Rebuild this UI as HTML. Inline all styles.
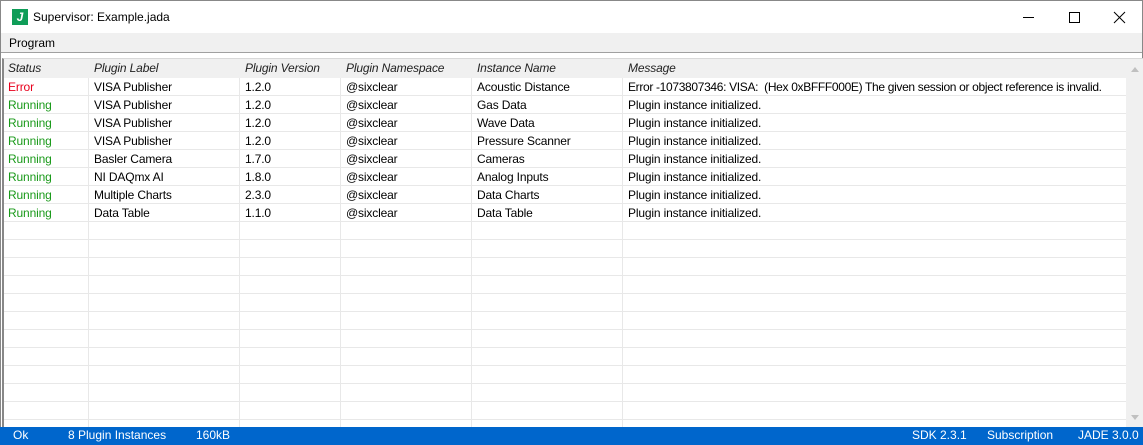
<!DOCTYPE html>
<html><head><style>
*{margin:0;padding:0;box-sizing:border-box}
body{width:1143px;height:445px;overflow:hidden;font-family:"Liberation Sans",sans-serif;font-size:12px;color:#000;background:#fff;position:relative}
.win{position:absolute;left:0;top:0;width:1143px;height:445px;border:1px solid #888}
.title{position:absolute;left:0;top:0;width:1141px;height:32px;background:#fff}
.logo{position:absolute;left:11px;top:8px;width:16px;height:16px;background:#0f9d58;color:#fff;font-weight:bold;font-size:12px;line-height:16px;text-align:center;font-style:italic}
.ttext{position:absolute;left:32px;top:9px;font-size:12px}
.menu{position:absolute;left:0;top:32px;width:1141px;height:20px;background:#f0f0f0;border-bottom:1px solid #a0a0a0}
.menu span{position:absolute;left:8px;top:3px}
.tbl{position:absolute;left:1px;top:57px;width:1141px;height:369px;border-top:1px solid #d8d8d8;border-left:2px solid #888;overflow:hidden}
.row{position:absolute;left:0;height:18px;width:1122px;border-bottom:1px solid #e8e8e8}
.hdr{background:#f0f0f0;font-style:italic;color:#222;border-bottom:none}
.c{position:absolute;top:2px;white-space:nowrap;letter-spacing:-0.15px}
.vl{position:absolute;top:19px;width:1px;height:360px;background:#e8e8e8}
.sb{position:absolute;left:1122px;top:0;width:18px;height:369px;background:#f0f0f0}
.status{position:absolute;left:0;top:427px;width:1143px;height:18px;background:#0066cc;color:#fff}
.status span{position:absolute;top:1px}
.r{color:#e8001c}.g{color:#1a9a1a}
</style></head><body>
<div class="win">
<div class="title"><div class="logo">J</div><div class="ttext">Supervisor: Example.jada</div>
<svg style="position:absolute;left:1022px;top:10px" width="110" height="14"><line x1="0" y1="6.5" x2="11" y2="6.5" stroke="#000"/><rect x="46.5" y="1.5" width="10" height="10" fill="none" stroke="#000"/><path d="M91 1L102 12M102 1L91 12" stroke="#000"/></svg></div>
<div class="menu"><span>Program</span></div>
<div class="tbl">
<div class="row hdr" style="top:0;height:19px"><span class="c" style="left:4px">Status</span><span class="c" style="left:90px">Plugin Label</span><span class="c" style="left:241px">Plugin Version</span><span class="c" style="left:342px">Plugin Namespace</span><span class="c" style="left:473px">Instance Name</span><span class="c" style="left:624px">Message</span></div>
<div id="rows"></div>
<div class="vl" style="left:84px"></div><div class="vl" style="left:235px"></div><div class="vl" style="left:336px"></div><div class="vl" style="left:467px"></div><div class="vl" style="left:618px"></div>
<div class="sb"><svg width="18" height="369"><path d="M5 13L9 8L13 13Z" fill="#c0c0c0"/><path d="M5 356L9 361L13 356Z" fill="#c0c0c0"/></svg></div>
</div>
<script>
var d=[["Error","r","VISA Publisher","1.2.0","Acoustic Distance","<span style='letter-spacing:-0.33px'>Error -1073807346: VISA:&nbsp; (Hex 0xBFFF000E) The given session or object reference is invalid.</span>"],
["Running","g","VISA Publisher","1.2.0","Gas Data","Plugin instance initialized."],
["Running","g","VISA Publisher","1.2.0","Wave Data","Plugin instance initialized."],
["Running","g","VISA Publisher","1.2.0","Pressure Scanner","Plugin instance initialized."],
["Running","g","Basler Camera","1.7.0","Cameras","Plugin instance initialized."],
["Running","g","NI DAQmx AI","1.8.0","Analog Inputs","Plugin instance initialized."],
["Running","g","Multiple Charts","2.3.0","Data Charts","Plugin instance initialized."],
["Running","g","Data Table","1.1.0","Data Table","Plugin instance initialized."]];
var h="";for(var i=0;i<20;i++){var t=19+i*18;h+='<div class="row" style="top:'+t+'px">';if(d[i]){var r=d[i];h+='<span class="c '+r[1]+'" style="left:4px">'+r[0]+'</span><span class="c" style="left:90px">'+r[2]+'</span><span class="c" style="left:241px">'+r[3]+'</span><span class="c" style="left:342px">@sixclear</span><span class="c" style="left:473px">'+r[4]+'</span><span class="c" style="left:624px">'+r[5]+'</span>';}h+='</div>';}
document.getElementById("rows").outerHTML=h;
</script>
</div>
<div class="status"><span style="left:13px">Ok</span><span style="left:68px">8 Plugin Instances</span><span style="left:196px">160kB</span><span style="left:912px">SDK 2.3.1</span><span style="left:987px">Subscription</span><span style="left:1078px">JADE 3.0.0</span></div>
</body></html>
